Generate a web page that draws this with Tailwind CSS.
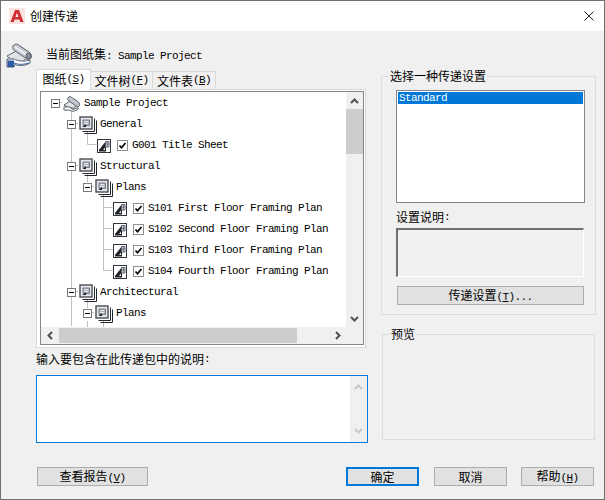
<!DOCTYPE html>
<html lang="zh">
<head>
  <meta charset="UTF-8">
  <title>创建传递</title>
  <script src="https://cdn.jsdelivr.net/npm/@tailwindcss/browser@4"></script>
</head>
<body class="bg-[#f0f0f0] text-black overflow-hidden font-['Noto_Sans_CJK_SC',sans-serif] text-[12px] leading-none">
  <svg width="0" height="0" class="absolute">
    <defs>
      <symbol id="expander" viewBox="0 0 9 9">
        <rect x=".5" y=".5" width="8" height="8" fill="#fff" stroke="#7a7a7a"/>
        <path d="M2 4.500h5" stroke="#000"/>
      </symbol>
      <symbol id="subset" viewBox="0 0 18 18">
        <path d="M5.500 17.500h12v-13M3.500 15.500h12v-13" fill="none" stroke="#23262d"/>
        <rect x="1" y="1" width="12" height="12" fill="#e4e6ea" stroke="#4a4d55" stroke-width="1.400"/>
        <path d="M4 4h6.500v5.500H4z" fill="#b0b5c0" stroke="#5f6470" stroke-width=".8"/>
        <path d="M5 5.500h4M5 7.500h4" stroke="#f2f3f5" stroke-width=".8"/>
        <path d="M3.500 11h3.500V8z" fill="#1f2229"/>
      </symbol>
      <symbol id="sheet" viewBox="0 0 14 14">
        <rect x=".5" y=".5" width="13" height="13" fill="#fff" stroke="#32353d"/>
        <path d="M2 12.500V11L9 2V12.500Z" fill="#1f2229"/>
        <path d="M8.500 2.500h3.500v5.500h-3.500zM8.500 5h3.500M10.300 2.500v5.500" fill="#e6e8ee" stroke="#5c606c" stroke-width=".9"/>
        <path d="M6 11h2V8.500z" fill="#fff"/>
      </symbol>
      <symbol id="check" viewBox="0 0 11 11">
        <rect x=".5" y=".5" width="10" height="10" fill="#fff" stroke="#8f8f8f"/>
        <path d="M2.500 5.500 4.500 7.800 8.500 3" fill="none" stroke="#000" stroke-width="1.700"/>
      </symbol>
      <symbol id="chev-up" viewBox="0 0 9 6">
        <path d="M1 5 4.500 1.500 8 5" fill="none" stroke="currentColor" stroke-width="2"/>
      </symbol>
      <symbol id="chev-down" viewBox="0 0 9 6">
        <path d="M1 1 4.500 4.500 8 1" fill="none" stroke="currentColor" stroke-width="2"/>
      </symbol>
    </defs>
  </svg>

  <div class="w-[605px] h-[500px] border border-[#707070] bg-[#f0f0f0] flex flex-col">
    <!-- title bar -->
    <div class="h-[30px] bg-white flex items-center shrink-0">
      <svg class="ml-[8px] mr-[5px]" width="16" height="16" viewBox="0 0 16 16">
        <rect width="16" height="16" fill="#fae3df"/>
        <path d="M1.500 14 6 2h4l4.500 12h-3.200l-.9-2.600H5.600L4.700 14zM6.500 9h3L8 4.800z" fill="#cf2b33" fill-rule="evenodd"/>
      </svg>
      <span class="text-[12px]">创建传递</span>
      <svg class="ml-auto mr-[10px]" width="10" height="10" viewBox="0 0 10 10">
        <path d="M.5.500l9 9M9.500.500l-9 9" stroke="#222" fill="none"/>
      </svg>
    </div>

    <div class="flex h-[436px] shrink-0">
      <!-- left column -->
      <div class="w-[367px] shrink-0 flex flex-col">
        <div class="h-[38px] flex items-start shrink-0">
          <svg class="ml-[5px] mt-[12px]" width="27" height="25" viewBox="0 0 27 25">
            <path d="M1 13 12 7l11 6-7 6-9-1z" fill="#dfe2e7" stroke="#5f646d"/>
            <path d="M7 3c2-3 5-2 7 0l9 6c3 2 3 6 1 7-2 1-4 0-6-2L9 8C7 7 6 5 7 3z" fill="#c3c7cf" stroke="#5b6069"/>
            <path d="M9 4l12 8" stroke="#f2f3f5" stroke-width="2"/>
            <ellipse cx="22.500" cy="13" rx="2.500" ry="3" fill="#8a8f99" stroke="#5b6069"/>
            <path d="M1 16h7c4 2 10 3 16 1v3c-5 3-11 3-15 1.500L8 24H1z" fill="#fff" stroke="#5a616c"/>
            <path d="M1.500 17.500H8V24H1.500z" fill="#2a5d9f"/>
            <path d="M8 20c5 2 10 1.500 15 0" fill="none" stroke="#2a5d9f"/>
          </svg>
          <div class="ml-[13px] mt-[17px] whitespace-nowrap">当前图纸集<span class="font-['Liberation_Mono'] text-[11px] tracking-[-0.6px]">: Sample Project</span></div>
        </div>

        <!-- tabs -->
        <div class="ml-[35px] h-[21px] flex items-end shrink-0 relative z-10">
          <div class="w-[55px] h-[21px] pb-[2px] bg-white border border-b-0 border-[#d9d9d9] flex items-center justify-center whitespace-nowrap">图纸<span class="font-['Liberation_Mono'] text-[11px] tracking-[-0.6px]">(<span class="underline">S</span>)</span></div>
          <div class="w-[62px] h-[19px] pb-px border border-l-0 border-b-0 border-[#d9d9d9] flex items-center justify-center whitespace-nowrap">文件树<span class="font-['Liberation_Mono'] text-[11px] tracking-[-0.6px]">(<span class="underline">F</span>)</span></div>
          <div class="w-[63px] h-[19px] pb-px border border-l-0 border-b-0 border-[#d9d9d9] flex items-center justify-center whitespace-nowrap">文件表<span class="font-['Liberation_Mono'] text-[11px] tracking-[-0.6px]">(<span class="underline">B</span>)</span></div>
        </div>

        <!-- tab panel -->
        <div class="ml-[35px] -mt-px w-[330px] h-[259px] bg-white border border-[#d9d9d9] pl-[3px] pt-[1px] shrink-0">
          <div class="w-[324px] h-[254px] border border-[#84848f] relative">
            <div class="flex h-[235px]">
              <!-- tree -->
              <div class="w-[305px] h-[235px] overflow-hidden relative font-['Liberation_Mono'] text-[11px] tracking-[-0.6px]">
                <svg class="absolute left-0 top-0" width="305" height="235" viewBox="41 92 305 235">
                  <path d="M59.500 102.500h3M71.500 111v215M75 123.500h3M87.500 132v12.500h9M75 165.500h3M87.500 174v8M91 186.500h3M103.500 195v75.500h9M103.500 207.500h9M103.500 228.500h9M103.500 249.500h9M75 291.500h3M87.500 300v8M91 312.500h3M87.500 321v6M103.500 321v6" stroke="#c0c0c0" fill="none"/>
                </svg>
                <div class="relative flex flex-col pt-[1px]">
                  <div class="h-[21px] flex items-center pl-[10px]"><svg width="9" height="9"><use href="#expander"/></svg><svg class="ml-[3px]" width="18" height="16" viewBox="0 0 27 25"><path d="M1 14 12 7l11 6-7 6-9-1z" fill="#dfe2e7" stroke="#4c5058" stroke-width="1.400"/><path d="M7 3c2-3 5-2 7 0l9 6c3 2 3 6 1 7-2 1-4 0-6-2L9 8C7 7 6 5 7 3z" fill="#c3c7cf" stroke="#4c5058" stroke-width="1.400"/><path d="M1 17h8l6 4 8-3v3l-8 3-6-2H1z" fill="#fff" stroke="#4c5058" stroke-width="1.400"/></svg><span class="ml-[3px]">Sample Project</span></div>
                  <div class="h-[21px] flex items-center pl-[26px]"><svg width="9" height="9"><use href="#expander"/></svg><svg class="ml-[3px]" width="18" height="18"><use href="#subset"/></svg><span class="ml-[3px]">General</span></div>
                  <div class="h-[21px] flex items-center pl-[56px]"><svg width="14" height="14"><use href="#sheet"/></svg><svg class="ml-[6px]" width="11" height="11"><use href="#check"/></svg><span class="ml-[4px]">G001 Title Sheet</span></div>
                  <div class="h-[21px] flex items-center pl-[26px]"><svg width="9" height="9"><use href="#expander"/></svg><svg class="ml-[3px]" width="18" height="18"><use href="#subset"/></svg><span class="ml-[3px]">Structural</span></div>
                  <div class="h-[21px] flex items-center pl-[42px]"><svg width="9" height="9"><use href="#expander"/></svg><svg class="ml-[3px]" width="18" height="18"><use href="#subset"/></svg><span class="ml-[3px]">Plans</span></div>
                  <div class="h-[21px] flex items-center pl-[72px] whitespace-nowrap"><svg width="14" height="14"><use href="#sheet"/></svg><svg class="ml-[6px]" width="11" height="11"><use href="#check"/></svg><span class="ml-[4px]">S101 First Floor Framing Plan</span></div>
                  <div class="h-[21px] flex items-center pl-[72px] whitespace-nowrap"><svg width="14" height="14"><use href="#sheet"/></svg><svg class="ml-[6px]" width="11" height="11"><use href="#check"/></svg><span class="ml-[4px]">S102 Second Floor Framing Plan</span></div>
                  <div class="h-[21px] flex items-center pl-[72px] whitespace-nowrap"><svg width="14" height="14"><use href="#sheet"/></svg><svg class="ml-[6px]" width="11" height="11"><use href="#check"/></svg><span class="ml-[4px]">S103 Third Floor Framing Plan</span></div>
                  <div class="h-[21px] flex items-center pl-[72px] whitespace-nowrap"><svg width="14" height="14"><use href="#sheet"/></svg><svg class="ml-[6px]" width="11" height="11"><use href="#check"/></svg><span class="ml-[4px]">S104 Fourth Floor Framing Plan</span></div>
                  <div class="h-[21px] flex items-center pl-[26px]"><svg width="9" height="9"><use href="#expander"/></svg><svg class="ml-[3px]" width="18" height="18"><use href="#subset"/></svg><span class="ml-[3px]">Architectural</span></div>
                  <div class="h-[21px] flex items-center pl-[42px]"><svg width="9" height="9"><use href="#expander"/></svg><svg class="ml-[3px]" width="18" height="18"><use href="#subset"/></svg><span class="ml-[3px]">Plans</span></div>
                </div>
              </div>
              <!-- vertical scrollbar -->
              <div class="w-[17px] h-[235px] bg-[#f0f0f0] flex flex-col items-center text-[#505050] shrink-0">
                <div class="h-[17px] flex items-center justify-center shrink-0"><svg width="9" height="6"><use href="#chev-up"/></svg></div>
                <div class="w-full h-[45px] bg-[#cdcdcd] shrink-0"></div>
                <div class="flex-1"></div>
                <div class="h-[17px] flex items-center justify-center shrink-0"><svg width="9" height="6"><use href="#chev-down"/></svg></div>
              </div>
            </div>
            <!-- horizontal scrollbar -->
            <div class="h-[17px] flex items-center bg-[#f0f0f0] text-[#505050]">
              <div class="w-[18px] h-full flex items-center justify-center shrink-0"><svg width="6" height="9" viewBox="0 0 6 9"><path d="M5 1 1.500 4.500 5 8" fill="none" stroke="currentColor" stroke-width="2"/></svg></div>
              <div class="w-[238px] h-[15px] bg-[#cdcdcd] shrink-0"></div>
              <div class="w-[49px] h-full flex items-center justify-end pr-[5px] shrink-0"><svg width="6" height="9" viewBox="0 0 6 9"><path d="M1 1 4.500 4.500 1 8" fill="none" stroke="currentColor" stroke-width="2"/></svg></div>
            </div>
          </div>
        </div>

        <div class="ml-[35px] mt-[5px] h-[12px] flex items-center whitespace-nowrap shrink-0">输入要包含在此传递包中的说明<span class="font-['Liberation_Mono'] text-[11px]">:</span></div>
        <div class="ml-[35px] mt-[10px] w-[332px] h-[68px] bg-white border border-[#0078d7] flex justify-end shrink-0">
          <div class="w-[17px] h-full bg-[#f0f0f0] flex flex-col justify-between items-center py-[8px] text-[#c8c8c8]">
            <svg width="9" height="6"><use href="#chev-up"/></svg>
            <svg width="9" height="6"><use href="#chev-down"/></svg>
          </div>
        </div>
      </div>

      <!-- right column -->
      <div class="flex-1 flex flex-col pl-[13px] pt-[39px]">
        <fieldset class="w-[215px] h-[245px] border border-[#dcdcdc] shrink-0">
          <legend class="ml-[7px] px-[1px] leading-[12px]">选择一种传递设置</legend>
          <div class="pl-[14px]">
            <div class="w-[189px] h-[113px] mt-[8px] bg-white border border-[#84848f] p-[1px]">
              <div class="h-[12px] bg-[#0078d7] text-white font-['Liberation_Mono'] text-[11px] tracking-[-0.6px] pl-px leading-[12px]">Standard</div>
            </div>
            <div class="mt-[8px] h-[12px] flex items-center">设置说明<span class="font-['Liberation_Mono'] text-[11px]">:</span></div>
            <div class="mt-[5px] w-[188px] h-[49px] border border-t-2 border-l-2 border-t-[#6f6f6f] border-l-[#6f6f6f] border-r-white border-b-white"></div>
            <button class="block mt-[9px] ml-px w-[187px] h-[19px] bg-[#e1e1e1] border border-[#adadad] text-[12px]">传递设置<span class="font-['Liberation_Mono'] text-[11px] tracking-[-0.6px]">(<span class="underline">T</span>)...</span></button>
          </div>
        </fieldset>
        <fieldset class="ml-px mt-[13px] w-[213px] h-[112px] border border-[#dcdcdc] shrink-0">
          <legend class="ml-[7px] px-[1px] leading-[12px]">预览</legend>
        </fieldset>
      </div>
    </div>

    <!-- bottom buttons -->
    <div class="flex h-[19px] pl-[36px] shrink-0">
      <button class="w-[111px] bg-[#e1e1e1] border border-[#adadad] text-[12px]">查看报告<span class="font-['Liberation_Mono'] text-[11px] tracking-[-0.6px]">(<span class="underline">V</span>)</span></button>
      <button class="ml-[198px] w-[73px] bg-[#e1e1e1] border-2 border-[#0078d7] text-[12px]">确定</button>
      <button class="ml-[15px] w-[73px] bg-[#e1e1e1] border border-[#adadad] text-[12px]">取消</button>
      <button class="ml-[14px] w-[73px] bg-[#e1e1e1] border border-[#adadad] text-[12px]">帮助<span class="font-['Liberation_Mono'] text-[11px] tracking-[-0.6px]">(<span class="underline">H</span>)</span></button>
    </div>
  </div>
</body>
</html>
